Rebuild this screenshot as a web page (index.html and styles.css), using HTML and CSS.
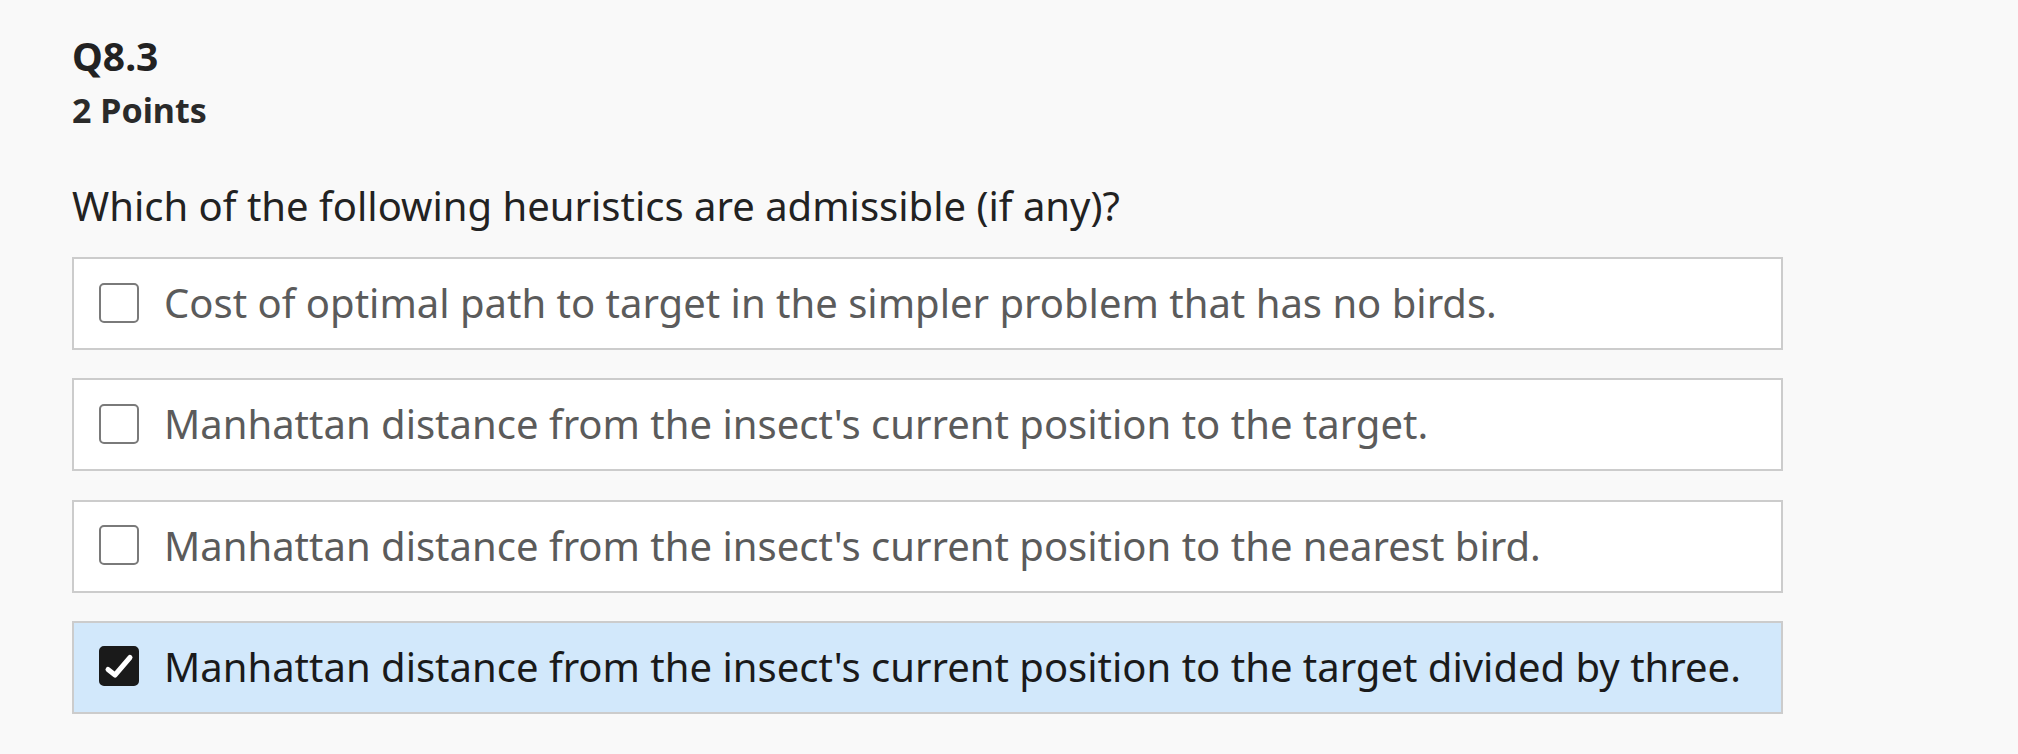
FILE: index.html
```html
<!DOCTYPE html>
<html lang="en">
<head>
<meta charset="utf-8">
<title>Q8.3</title>
<link rel="stylesheet" href="styles.css">
</head>
<body>
<main class="question">
  <h2 class="q-title">Q8.3</h2>
  <div class="q-points">2 Points</div>
  <p class="q-prompt">Which of the following heuristics are admissible (if any)?</p>
  <div class="choices">
    <label class="choice">
      <span class="box"></span>
      <span class="choice-text">Cost of optimal path to target in the simpler problem that has no birds.</span>
    </label>
    <label class="choice">
      <span class="box"></span>
      <span class="choice-text">Manhattan distance from the insect's current position to the target.</span>
    </label>
    <label class="choice">
      <span class="box"></span>
      <span class="choice-text">Manhattan distance from the insect's current position to the nearest bird.</span>
    </label>
    <label class="choice is-checked">
      <span class="box">
        <svg viewBox="0 0 40 40" width="40" height="40" aria-hidden="true"><path d="M9 23.5 L16 29 L31 11.5" fill="none" stroke="#fff" stroke-width="5" stroke-linecap="round" stroke-linejoin="round"/></svg>
      </span>
      <span class="choice-text">Manhattan distance from the insect's current position to the target divided by three.</span>
    </label>
  </div>
</main>
</body>
</html>
```

FILE: styles.css
```css
html, body {
  margin: 0;
  padding: 0;
  background: #f9f9f9;
}
body {
  font-family: "Noto Sans", "Open Sans", sans-serif;
  color: #222;
}
.question {
  padding: 29px 0 0 72px;
  width: 1711px;
}
.q-title {
  margin: 0;
  font-size: 39px;
  line-height: 53px;
  font-weight: 700;
  color: #222;
}
.q-points {
  margin-top: 4px;
  font-size: 34px;
  line-height: 48px;
  font-weight: 700;
  color: #2a2a2a;
}
.q-prompt {
  margin: 43px 0 0;
  font-size: 40px;
  line-height: 57px;
  color: #222;
}
.choices {
  margin-top: 23px;
  display: flex;
  flex-direction: column;
  gap: 28.33px;
}
.choice {
  display: flex;
  align-items: center;
  height: 93px;
  box-sizing: border-box;
  border: 2px solid #cccccc;
  background: #ffffff;
  padding: 0 25px 2px;
  gap: 25px;
}
.box {
  flex: none;
  width: 40px;
  height: 40px;
  box-sizing: border-box;
  border: 2px solid #7a7a7a;
  border-radius: 5px;
  background: #fff;
  display: flex;
}
.choice-text {
  font-size: 40px;
  line-height: 57px;
  color: #5b5b5b;
  white-space: nowrap;
}
.is-checked {
  background: #d2e8fb;
}
.is-checked .box {
  background: #1a1a1a;
  border-color: #1a1a1a;
}
.is-checked .box svg {
  margin: -2px;
}
.is-checked .choice-text {
  color: #1a1a1a;
}
```
